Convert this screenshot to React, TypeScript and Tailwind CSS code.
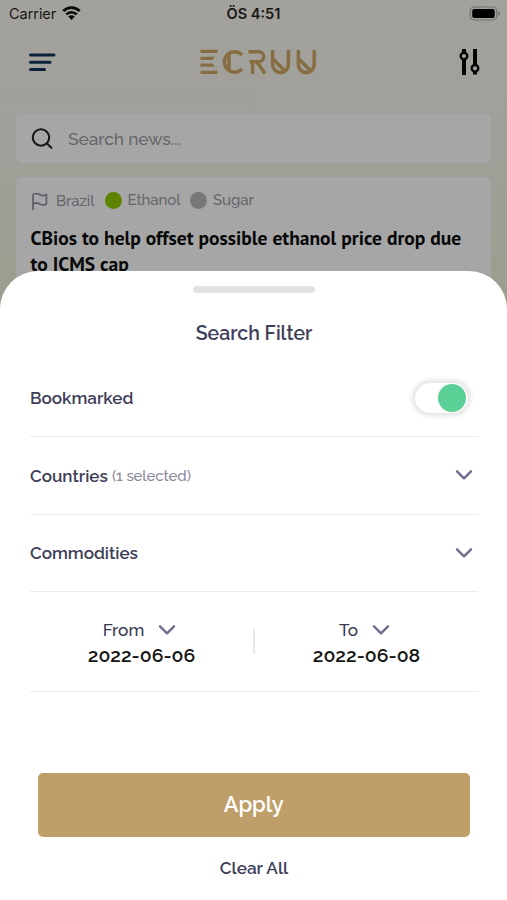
import React from "react";

const raleway = "font-[Raleway,Lato,'Noto_Sans',sans-serif]";

function Chevron() {
  return (
    <svg width="18" height="12" viewBox="0 0 18 12" fill="none" stroke="#716f8d" strokeWidth="2.4" strokeLinecap="round" strokeLinejoin="round">
      <path d="M2 2.3 9 9.3l7-7" />
    </svg>
  );
}

function Logo() {
  return (
    <svg width="118" height="26" viewBox="0 0 118 26" fill="none" stroke="#876d42" strokeWidth="3.5" className="ml-[2px]">
      <path d="M.5 2.4h17M.5 23.4h17" strokeWidth="3.2" />
      <path d="M.5 7.7h14.6l-2.4 3.4H.5zM.5 14.4h12l2.6 3.4H.5z" fill="#876d42" stroke="none" />
      <path d="M42 6a10.2 10.2 0 1 0 0 14M29 3.5v19" />
      <path d="M48.5 2.8h10.2a5 5 0 0 1 0 10H49.5M52.6 12.8V25M57.3 13.5 65 24.5" />
      <path d="M72.6 1v14.6a7.9 7.9 0 0 0 15.8 0V1M72.6 9.5 85 22" />
      <path d="M98.4 1v14.6a7.9 7.9 0 0 0 15.8 0V1M98.4 9.5 110.8 22" />
    </svg>
  );
}

function StatusBar() {
  return (
    <div className="flex h-7 items-center justify-between pl-[9px] pr-[6px] font-[Inter,sans-serif] text-[14.5px] leading-none text-[#171716]">
      <div className="flex w-[118px] items-center gap-[6px]">
        <span className="tracking-[-0.05px]">Carrier</span>
        <svg width="19" height="14" viewBox="0 0 18 14" fill="none" stroke="#080808" strokeWidth="2.7" className="-mt-[2px]">
          <path d="M.8 5a11.5 11.5 0 0 1 16.4 0M3.8 8.4a7.4 7.4 0 0 1 10.4 0" />
          <path d="M5.8 10.6a4.4 4.4 0 0 1 6.4 0L9 14z" fill="#080808" stroke="none" />
        </svg>
      </div>
      <span className="text-[14.5px] font-semibold">ÖS 4:51</span>
      <div className="flex w-[121px] justify-end">
        <svg width="32" height="15" viewBox="0 0 32 15" className="-mt-px">
          <rect x="1.2" y="1" width="26.5" height="13" rx="4" fill="none" stroke="#74736f" strokeWidth="1.2" />
          <rect x="3.2" y="3" width="22.5" height="9" rx="2" fill="#000" />
          <path d="M29.2 5.2v4.6q2-.8 2-2.3t-2-2.3z" fill="#74736f" />
        </svg>
      </div>
    </div>
  );
}

function Header() {
  return (
    <div className="flex h-[68px] items-center justify-between pl-[28px] pr-[26px]">
      <svg width="28" height="20" viewBox="0 0 28 20" stroke="#0c2238" strokeWidth="3" strokeLinecap="round">
        <path d="M2.5 3h23.5M2.5 10.2h19.5M2.5 17.4h14" />
      </svg>
      <Logo />
      <svg width="22" height="28" viewBox="0 0 22 28" fill="none" stroke="#050505">
        <path d="M5 1v3.5M5 10.5V27M16 1v16M16 23.5V26.5" strokeWidth="4" />
        <circle cx="5" cy="8" r="3.3" strokeWidth="2.4" />
        <circle cx="16" cy="20.3" r="3.3" strokeWidth="2.4" />
      </svg>
    </div>
  );
}

function NewsCard() {
  return (
    <div className="mt-[14px] h-[200px] rounded-[5px] bg-[#a6a6a6] px-[14.5px] pt-[13px]">
      <div className="flex h-5 items-center text-[15px] font-medium leading-none text-[#65656c]">
        <svg width="17" height="19" viewBox="0 0 17 19" fill="none" stroke="#606269" strokeWidth="1.8" strokeLinejoin="round" className="mr-[8.5px] mt-[2px]">
          <path d="M2 18V2.6q3.2-2 6.8 0t6.6 0V12q-3 2-6.6 0T2 12" />
        </svg>
        <span className="mt-[2px] w-[48.5px] tracking-[-0.1px]">Brazil</span>
        <span className="mr-[6px] h-[17px] w-[17px] rounded-full bg-[#5c8400]" />
        <span className="w-[62.5px] tracking-[-0.1px]">Ethanol</span>
        <span className="mr-[6px] h-[17px] w-[17px] rounded-full bg-[#777]" />
        <span className="tracking-[-0.1px]">Sugar</span>
      </div>
      <p className="mt-[15px] whitespace-nowrap font-['PT_Sans','Open_Sans',sans-serif] text-[19.55px] font-bold leading-[25.5px] text-[#080808]">
        CBios to help offset possible ethanol price drop due
        <br />
        to ICMS cap
      </p>
    </div>
  );
}

function DateField({ label, value }: { label: string; value: string }) {
  return (
    <div className="flex flex-1 flex-col items-center pt-[3px]">
      <div className="flex h-[25px] items-center gap-[14px] pr-[4px] text-[17.2px] font-medium text-[#3a3852]">
        <span className="pt-px">{label}</span>
        <Chevron />
      </div>
      <div className="h-[25px] text-[19.4px] font-semibold leading-[25px] text-[#161616]">{value}</div>
    </div>
  );
}

function FilterSheet() {
  return (
    <div className="absolute inset-x-0 bottom-0 flex h-[629px] flex-col rounded-t-[38px] bg-white pl-[30px] pr-[29px] text-[#403e58]">
      <div className="mx-auto mt-[14.5px] h-[7px] w-[122px] shrink-0 rounded-full bg-[#e3e3e3]" />
      <h1 className="mt-[28px] h-[26px] text-center text-[19.5px] font-semibold leading-[26px]">Search Filter</h1>
      <div className="mt-[12.5px] flex h-[78px] items-center justify-between border-b-[1.5px] border-[#ebebed] pr-[10px]">
        <span className="pt-[2px] text-[17.1px] font-semibold">Bookmarked</span>
        <span className="flex h-[30px] w-[53px] items-center justify-end rounded-full bg-white pr-[2px] shadow-[0_0_4px_3px_#e5e5e5]">
          <span className="h-7 w-7 rounded-full bg-[#5bd197]" />
        </span>
      </div>
      <div className="flex h-[77.5px] items-center justify-between border-b-[1.5px] border-[#ebebed] pr-[5px]">
        <span className="flex items-center gap-1 pt-[3px]">
          <span className="text-[17.1px] font-semibold">Countries</span>
          <span className="-mt-px text-[15px] font-medium tracking-[-0.1px] text-[#8c8a9d]">(1 selected)</span>
        </span>
        <Chevron />
      </div>
      <div className="flex h-[77px] items-center justify-between border-b-[1.5px] border-[#ebebed] pr-[5px]">
        <span className="pt-[2px] text-[17.1px] font-semibold">Commodities</span>
        <Chevron />
      </div>
      <div className="flex h-[100px] items-center border-b-[1.5px] border-[#ebebed]">
        <DateField label="From" value="2022-06-06" />
        <span className="h-[25px] w-[2px] bg-[#e9e9eb]" />
        <DateField label="To" value="2022-06-08" />
      </div>
      <button className="ml-[7.5px] mr-[8px] mt-[81px] h-[64px] shrink-0 rounded-[5px] bg-[#bf9f69] pt-px text-[21.8px] font-semibold text-white">Apply</button>
      <button className="mx-auto mt-[19.5px] h-6 text-[17.2px] font-semibold leading-6">Clear All</button>
    </div>
  );
}

export default function App() {
  return (
    <main className={`relative h-[900px] w-[507px] overflow-hidden bg-linear-to-b from-[#a3a19b] from-0% via-[#a09f99] via-17% to-[#9d9d90] to-30% ${raleway}`}>
      <StatusBar />
      <Header />
      <div className="mt-[18px] px-4">
        <div className="flex h-[49px] items-center rounded-[5px] bg-[#a6a6a6] pl-[15px] text-[17.4px] font-medium text-[#66666a]">
          <svg width="22" height="22" viewBox="0 0 22 22" fill="none" stroke="#17191b" strokeWidth="2.1" strokeLinecap="round" className="mr-[15px]">
            <circle cx="10" cy="9.5" r="8.2" />
            <path d="m16 15.5 4.3 4.3" />
          </svg>
          <span className="pt-px tracking-[-0.1px]">Search news...</span>
        </div>
        <NewsCard />
      </div>
      <FilterSheet />
    </main>
  );
}
